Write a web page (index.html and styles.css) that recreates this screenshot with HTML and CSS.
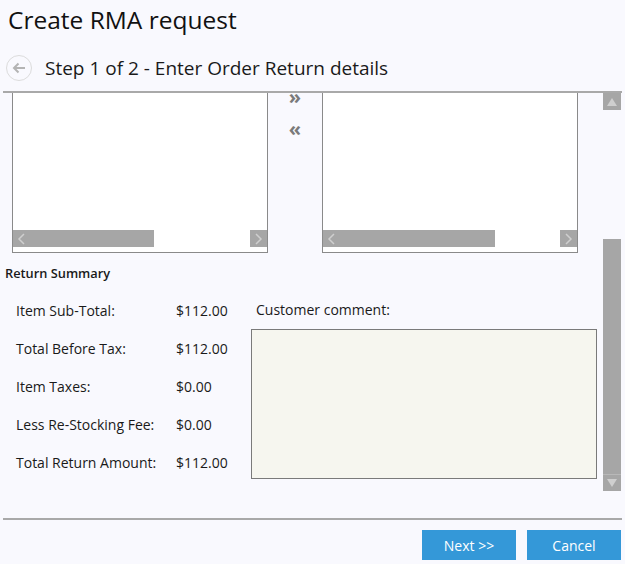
FILE: index.html
```html
<!DOCTYPE html>
<html>
<head>
<meta charset="utf-8">
<link rel="stylesheet" href="styles.css">
</head>
<body>
<div class="page">
  <h1 class="title">Create RMA request</h1>
  <div class="step">
    <span class="back">
      <svg width="14" height="12" viewBox="0 0 14 12"><path d="M13 6H2M6.5 1.5L2 6l4.5 4.5" fill="none" stroke="#b4b4b4" stroke-width="2"/></svg>
    </span>
    <span class="step-text">Step 1 of 2 - Enter Order Return details</span>
  </div>
  <div class="rule"></div>
  <div class="content">
    <div class="main">
      <div class="lists">
        <div class="list">
          <div class="list-body"></div>
          <div class="hscroll">
            <div class="hthumb thumb-left">
              <svg width="8" height="12" viewBox="0 0 8 12"><path d="M7 1L2 6l5 5" fill="none" stroke="#cfcfcf" stroke-width="1.5"/></svg>
            </div>
            <div class="hspace"></div>
            <div class="hbtn">
              <svg width="8" height="12" viewBox="0 0 8 12"><path d="M1 1l5 5-5 5" fill="none" stroke="#cfcfcf" stroke-width="1.5"/></svg>
            </div>
          </div>
        </div>
        <div class="movers">
          <span class="mover">»</span>
          <span class="mover">«</span>
        </div>
        <div class="list">
          <div class="list-body"></div>
          <div class="hscroll">
            <div class="hthumb thumb-right">
              <svg width="8" height="12" viewBox="0 0 8 12"><path d="M7 1L2 6l5 5" fill="none" stroke="#cfcfcf" stroke-width="1.5"/></svg>
            </div>
            <div class="hspace"></div>
            <div class="hbtn">
              <svg width="8" height="12" viewBox="0 0 8 12"><path d="M1 1l5 5-5 5" fill="none" stroke="#cfcfcf" stroke-width="1.5"/></svg>
            </div>
          </div>
        </div>
      </div>
      <h2 class="section">Return Summary</h2>
      <div class="summary">
        <div class="totals">
          <span class="lbl">Item Sub-Total:</span><span class="val">$112.00</span>
          <span class="lbl">Total Before Tax:</span><span class="val">$112.00</span>
          <span class="lbl">Item Taxes:</span><span class="val">$0.00</span>
          <span class="lbl">Less Re-Stocking Fee:</span><span class="val">$0.00</span>
          <span class="lbl">Total Return Amount:</span><span class="val">$112.00</span>
        </div>
        <div class="comment">
          <span class="comment-lbl">Customer comment:</span>
          <div class="comment-box"></div>
        </div>
      </div>
    </div>
    <div class="vscroll">
      <div class="vbtn">
        <svg width="10" height="8" viewBox="0 0 10 8"><path d="M5 0L10 8H0z" fill="#cfcfcf"/></svg>
      </div>
      <div class="vthumb"></div>
      <div class="vbtn vbtn-down">
        <svg width="10" height="8" viewBox="0 0 10 8"><path d="M0 0h10L5 8z" fill="#cfcfcf"/></svg>
      </div>
    </div>
  </div>
  <div class="rule"></div>
  <div class="footer">
    <button class="btn">Next &gt;&gt;</button>
    <button class="btn">Cancel</button>
  </div>
</div>
</body>
</html>
```

FILE: styles.css
```css
* { box-sizing: border-box; }
html, body {
  margin: 0;
  padding: 0;
  background: #f9f9fe;
}
body {
  font-family: "Open Sans", "Noto Sans", sans-serif;
  color: #1a1a1a;
  width: 625px;
  height: 564px;
  overflow: hidden;
}
.page {
  display: flex;
  flex-direction: column;
  height: 564px;
}
.title {
  margin: 4px 0 0 8px;
  font-size: 24.5px;
  font-weight: 400;
  line-height: 32px;
  color: #111;
}
.step {
  display: flex;
  align-items: center;
  height: 30px;
  margin-top: 17px;
  padding-left: 6px;
  gap: 13px;
}
.back {
  width: 26px;
  height: 26px;
  border: 1px solid #dcdcdc;
  border-radius: 50%;
  display: flex;
  align-items: center;
  justify-content: center;
}
.step-text {
  font-size: 19px;
  color: #1a1a1a;
}
.rule {
  margin: 0 3px;
  height: 2px;
  background: #a9a9a9;
  flex: none;
}
.step + .rule { margin-top: 8px; }
.content {
  display: flex;
  height: 425px;
  flex: none;
}
.main {
  width: 603px;
  overflow: hidden;
}
.lists {
  display: flex;
  margin-top: -30px;
  padding-left: 12px;
}
.list {
  width: 256px;
  height: 190px;
  border: 1px solid #8a8a8a;
  background: #fff;
  display: flex;
  flex-direction: column;
  padding-bottom: 5px;
}
.list-body { flex: 1; }
.hscroll {
  display: flex;
  height: 17px;
}
.hthumb {
  background: #a6a6a6;
  display: flex;
  align-items: center;
  padding-left: 4px;
}
.thumb-left { width: 141px; }
.thumb-right { width: 172px; }
.hspace { flex: 1; }
.hbtn {
  width: 17px;
  background: #a6a6a6;
  display: flex;
  align-items: center;
  justify-content: center;
}
.movers {
  width: 54px;
  display: flex;
  flex-direction: column;
  align-items: center;
  padding-top: 22px;
  gap: 8px;
}
.mover {
  font-size: 20px;
  line-height: 24px;
  font-weight: 700;
  color: #7a7a7a;
}
.section {
  margin: 11px 0 0 5px;
  font-size: 12.8px;
  font-weight: 600;
  line-height: 18px;
  color: #1a1a1a;
}
.summary {
  display: flex;
  margin-top: 9px;
}
.totals {
  display: grid;
  grid-template-columns: 160px 75px;
  grid-auto-rows: 38px;
  padding-left: 16px;
  align-items: center;
  font-size: 14px;
}
.comment {
  display: flex;
  flex-direction: column;
}
.comment-lbl {
  font-size: 14px;
  line-height: 38px;
  padding-left: 5px;
}
.comment-box {
  width: 346px;
  height: 150px;
  background: #f6f6ef;
  border: 1px solid #7a7a7a;
}
.vscroll {
  width: 18px;
  display: flex;
  flex-direction: column;
}
.vbtn {
  height: 17px;
  background: #a6a6a6;
  display: flex;
  align-items: center;
  justify-content: center;
}
.vthumb {
  margin-top: 129px;
  height: 235px;
  background: #a6a6a6;
}
.vbtn-down {
  border-top: 1px solid #b8b8b8;
}
.footer {
  display: flex;
  justify-content: flex-end;
  gap: 11px;
  padding: 10px 4px 0 0;
}
.btn {
  width: 94px;
  height: 30px;
  border: none;
  background: #3498d8;
  color: #fff;
  font-family: "Open Sans", "Noto Sans", sans-serif;
  font-size: 14px;
  padding: 0;
}
```
